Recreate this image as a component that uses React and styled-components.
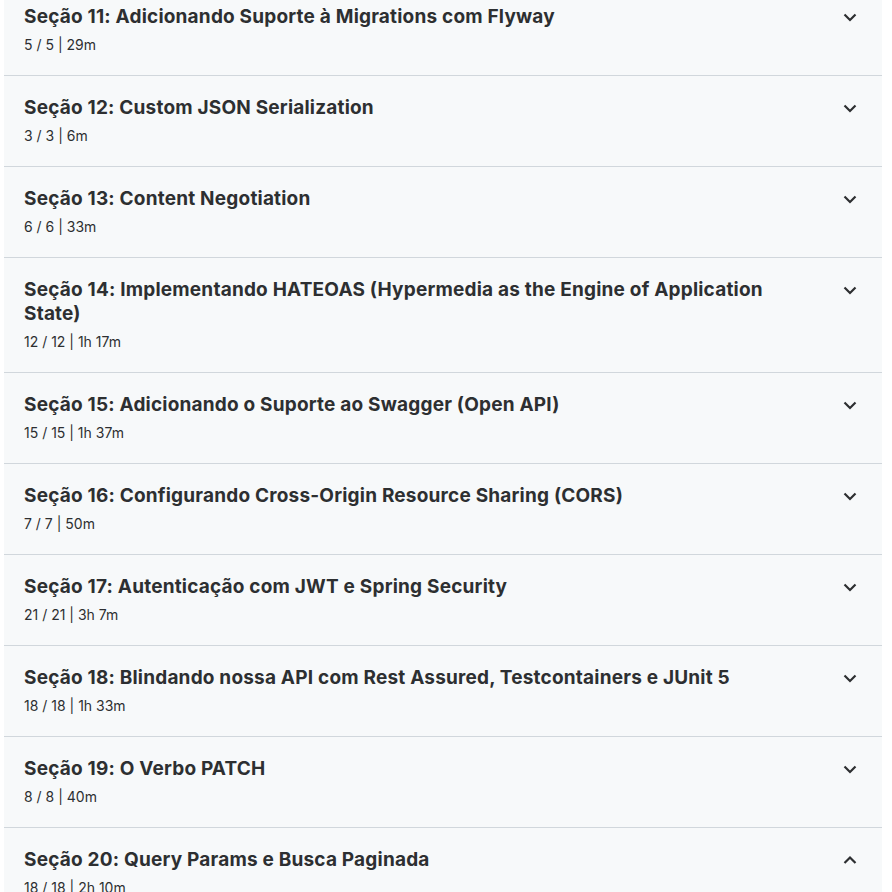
import styled, { createGlobalStyle } from 'styled-components';

const GlobalStyle = createGlobalStyle`
  body {
    margin: 0;
    background: #ffffff;
    font-family: "Inter", "Liberation Sans", sans-serif;
    color: #2d2f31;
    overflow: hidden;
  }
`;

const Page = styled.div`
  height: 892px;
  overflow: hidden;
  padding: 0 10px 0 4px;
`;

const List = styled.div`
  margin-top: -15px;
  background: #f7f9fa;
`;

const Section = styled.div`
  display: flex;
  align-items: flex-start;
  gap: 16px;
  padding: 20px 24px 20px 20px;
  border-bottom: 1px solid #d1d7dc;
`;

const Info = styled.div`
  flex: 1;
  min-width: 0;
`;

const Title = styled.div`
  font-size: 19px;
  font-weight: 700;
  line-height: 24px;
  letter-spacing: 0.2px;
  padding-right: 40px;
`;

const Meta = styled.div`
  margin-top: 5px;
  font-size: 14px;
  line-height: 21px;
`;

const Toggle = styled.span`
  display: flex;
  align-items: center;
  justify-content: center;
  width: 16px;
  height: 24px;
`;

function Chevron({ open }) {
  return (
    <svg width="14" height="14" viewBox="0 0 14 14" fill="none">
      <path
        d={open ? 'M1.5 10L7 4.5L12.5 10' : 'M1.5 4.5L7 10L12.5 4.5'}
        stroke="#2d2f31"
        strokeWidth="2.2"
      />
    </svg>
  );
}

const sections = [
  { title: 'Seção 11: Adicionando Suporte à Migrations com Flyway', meta: '5 / 5 | 29m' },
  { title: 'Seção 12: Custom JSON Serialization', meta: '3 / 3 | 6m' },
  { title: 'Seção 13: Content Negotiation', meta: '6 / 6 | 33m' },
  { title: 'Seção 14: Implementando HATEOAS (Hypermedia as the Engine of Application State)', meta: '12 / 12 | 1h 17m' },
  { title: 'Seção 15: Adicionando o Suporte ao Swagger (Open API)', meta: '15 / 15 | 1h 37m' },
  { title: 'Seção 16: Configurando Cross-Origin Resource Sharing (CORS)', meta: '7 / 7 | 50m' },
  { title: 'Seção 17: Autenticação com JWT e Spring Security', meta: '21 / 21 | 3h 7m' },
  { title: 'Seção 18: Blindando nossa API com Rest Assured, Testcontainers e JUnit 5', meta: '18 / 18 | 1h 33m' },
  { title: 'Seção 19: O Verbo PATCH', meta: '8 / 8 | 40m' },
  { title: 'Seção 20: Query Params e Busca Paginada', meta: '18 / 18 | 2h 10m', open: true },
];

export default function App() {
  return (
    <>
      <GlobalStyle />
      <Page>
        <List>
          {sections.map(s => (
            <Section key={s.title}>
              <Info>
                <Title>{s.title}</Title>
                <Meta>{s.meta}</Meta>
              </Info>
              <Toggle>
                <Chevron open={s.open} />
              </Toggle>
            </Section>
          ))}
        </List>
      </Page>
    </>
  );
}
